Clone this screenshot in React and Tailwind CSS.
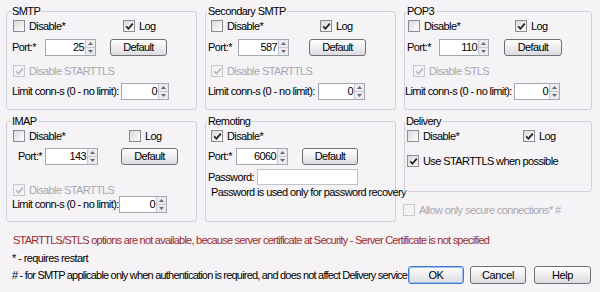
import React from "react";

const BG = "bg-[#f5f3f6]";

function Check({ checked, disabled }) {
  return (
    <span
      className={`w-[12px] h-[12px] shrink-0 border flex items-center justify-center ${
        disabled
          ? "border-[#c9c8cc] bg-[#f3f2f4]"
          : "border-[#8c8c90] bg-linear-to-br from-[#d9d9dc] to-white"
      }`}
    >
      {checked && (
        <svg width="9" height="9" viewBox="0 0 9 9">
          <path
            d="M1.2 4.3 L3.4 6.8 L7.8 1.6"
            stroke={disabled ? "#b8b8bc" : "#1e1e1e"}
            strokeWidth="1.7"
            fill="none"
          />
        </svg>
      )}
    </span>
  );
}

function CheckLabel({ checked, disabled, label, className = "" }) {
  return (
    <span className={`flex items-center gap-[4px] whitespace-nowrap ${className}`}>
      <Check checked={checked} disabled={disabled} />
      <span className={disabled ? "text-[#a9a8ad]" : "text-black"}>{label}</span>
    </span>
  );
}

function Spin({ value, w }) {
  return (
    <span className="flex h-[17px] border border-[#a4a8b0] bg-white shrink-0">
      <span className="flex items-center justify-end pr-[1px] text-black" style={{ width: w }}>
        {value}
      </span>
      <span className="w-[10px] flex flex-col border-l border-[#c6c6ce] bg-[#ececf0]">
        <span className="flex-1 flex items-center justify-center border-b border-[#c6c6ce]">
          <svg width="5" height="3" viewBox="0 0 5 3">
            <path d="M0 3 L2.5 0 L5 3 Z" fill="#6a6a70" />
          </svg>
        </span>
        <span className="flex-1 flex items-center justify-center">
          <svg width="5" height="3" viewBox="0 0 5 3">
            <path d="M0 0 L2.5 3 L5 0 Z" fill="#6a6a70" />
          </svg>
        </span>
      </span>
    </span>
  );
}

function Btn({ label, className = "", focus }) {
  return (
    <span
      className={`h-[17px] flex items-center justify-center rounded-[3px] border bg-linear-to-b from-white to-[#dcdce0] text-black shrink-0 ${
        focus ? "border-[#3c7fd0] shadow-[inset_0_0_0_1px_#9cc0ea]" : "border-[#707074]"
      } ${className}`}
    >
      {label}
    </span>
  );
}

function Group({ title, legendMl, h, children }) {
  return (
    <div className={`border border-[#d4d2d9] rounded-[3px] ${h}`}>
      <div className={`-mt-[7px] w-fit px-[1px] h-[12px] leading-[12px] whitespace-nowrap ${BG} ${legendMl}`}>
        {title}
      </div>
      {children}
    </div>
  );
}

export default function App() {
  return (
    <div
      className={`w-[600px] h-[292px] ${BG} overflow-hidden text-[11px] tracking-[-0.6px] leading-[14px] text-black font-['Liberation_Sans',Arial,sans-serif] pt-[11px] pl-[6px]`}
    >
      <div className="grid grid-cols-[191px_191px_188px] gap-x-[8px] gap-y-[11px] items-start">
        {/* SMTP */}
        <Group title="SMTP" legendMl="ml-[4px]" h="h-[99px]">
          <div className="h-[18px] flex items-center">
            <span className="ml-[6px] w-[110px]">
              <CheckLabel label="Disable*" />
            </span>
            <CheckLabel checked label="Log" />
          </div>
          <div className="mt-[3px] h-[18px] flex items-center">
            <span className="ml-[5px] w-[33px]">Port:*</span>
            <Spin value="25" w={39} />
            <Btn label="Default" className="ml-[14px] w-[57px]" />
          </div>
          <div className="mt-[8px] h-[14px] flex items-center">
            <CheckLabel checked disabled label="Disable STARTTLS" className="ml-[6px]" />
          </div>
          <div className="mt-[4px] h-[18px] flex items-center">
            <span className="ml-[5px] w-[109px] whitespace-nowrap">Limit conn-s (0 - no limit):</span>
            <Spin value="0" w={36} />
          </div>
        </Group>

        {/* Secondary SMTP */}
        <Group title="Secondary SMTP" legendMl="ml-[1px]" h="h-[99px]">
          <div className="h-[18px] flex items-center">
            <span className="ml-[5px] w-[109px]">
              <CheckLabel label="Disable*" />
            </span>
            <CheckLabel checked label="Log" />
          </div>
          <div className="mt-[3px] h-[18px] flex items-center">
            <span className="ml-[2px] w-[30px]">Port:*</span>
            <Spin value="587" w={39} />
            <Btn label="Default" className="ml-[20px] w-[57px]" />
          </div>
          <div className="mt-[8px] h-[14px] flex items-center">
            <CheckLabel checked disabled label="Disable STARTTLS" className="ml-[5px]" />
          </div>
          <div className="mt-[4px] h-[18px] flex items-center">
            <span className="ml-[2px] w-[110px] whitespace-nowrap">Limit conn-s (0 - no limit):</span>
            <Spin value="0" w={35} />
          </div>
        </Group>

        {/* POP3 */}
        <Group title="POP3" legendMl="ml-[1px]" h="h-[99px]">
          <div className="h-[18px] flex items-center">
            <span className="ml-[3px] w-[107px]">
              <CheckLabel label="Disable*" />
            </span>
            <CheckLabel checked label="Log" />
          </div>
          <div className="mt-[3px] h-[18px] flex items-center">
            <span className="ml-[2px] w-[32px]">Port:*</span>
            <Spin value="110" w={38} />
            <Btn label="Default" className="ml-[15px] w-[58px]" />
          </div>
          <div className="mt-[8px] h-[14px] flex items-center">
            <CheckLabel checked disabled label="Disable STLS" className="ml-[8px]" />
          </div>
          <div className="mt-[4px] h-[18px] flex items-center">
            <span className="ml-[0px] w-[109px] whitespace-nowrap">Limit conn-s (0 - no limit):</span>
            <Spin value="0" w={34} />
          </div>
        </Group>

        {/* IMAP */}
        <Group title="IMAP" legendMl="ml-[4px]" h="h-[101px]">
          <div className="h-[18px] flex items-center">
            <span className="ml-[6px] w-[116px]">
              <CheckLabel label="Disable*" />
            </span>
            <CheckLabel label="Log" />
          </div>
          <div className="mt-[2px] h-[18px] flex items-center">
            <span className="ml-[11px] w-[27px]">Port:*</span>
            <Spin value="143" w={41} />
            <Btn label="Default" className="ml-[23px] w-[57px]" />
          </div>
          <div className="mt-[18px] h-[14px] flex items-center">
            <CheckLabel checked disabled label="Disable STARTTLS" className="ml-[6px]" />
          </div>
          <div className="-mt-[2px] h-[18px] flex items-center">
            <span className="ml-[5px] w-[107px] whitespace-nowrap">Limit conn-s (0 - no limit):</span>
            <Spin value="0" w={36} />
          </div>
        </Group>

        {/* Remoting */}
        <Group title="Remoting" legendMl="ml-[1px]" h="h-[101px]">
          <div className="h-[18px] flex items-center">
            <CheckLabel checked label="Disable*" className="ml-[5px]" />
          </div>
          <div className="mt-[2px] h-[18px] flex items-center">
            <span className="ml-[2px] w-[28px]">Port:*</span>
            <Spin value="6060" w={40} />
            <Btn label="Default" className="ml-[14px] w-[56px]" />
          </div>
          <div className="mt-[4px] h-[16px] flex items-center">
            <span className="ml-[2px] w-[49px]">Password:</span>
            <span className="w-[101px] h-[16px] border border-[#c2c4ca] bg-white" />
          </div>
          <div className="h-[14px] flex items-center">
            <span className="ml-[5px] whitespace-nowrap">Password is used only for password recovery</span>
          </div>
        </Group>

        {/* Delivery */}
        <div className="flex flex-col">
          <Group title="Delivery" legendMl="ml-[0px]" h="h-[71px]">
            <div className="h-[18px] flex items-center">
              <span className="ml-[2px] w-[116px]">
                <CheckLabel label="Disable*" />
              </span>
              <CheckLabel checked label="Log" />
            </div>
            <div className="mt-[8px] h-[16px] flex items-center">
              <CheckLabel checked label="Use STARTTLS when possible" className="ml-[2px]" />
            </div>
          </Group>
          <div className="mt-[11px] h-[14px] flex items-center">
            <CheckLabel disabled label="Allow only secure connections* #" className="-ml-[1px]" />
          </div>
        </div>
      </div>

      <div className="mt-[11px] h-[14px] flex items-center pl-[7px] text-[#9a2b2d] whitespace-nowrap tracking-[-0.76px]">
        STARTTLS/STLS options are not available, because server certificate at Security - Server Certificate is not specified
      </div>
      <div className="mt-[4px] h-[14px] flex items-center pl-[6px]">* - requires restart</div>
      <div className="mt-[1px] h-[18px] flex items-center pl-[6px] pr-[9px]">
        <span className="whitespace-nowrap tracking-[-0.8px]">
          # - for SMTP applicable only when authentication is required, and does not affect Delivery service
        </span>
        <span className="ml-auto shrink-0 flex items-center tracking-[-0.4px]">
          <Btn label="OK" focus className="w-[56px] h-[18px]" />
          <Btn label="Cancel" className="ml-[6px] w-[56px] h-[18px]" />
          <Btn label="Help" className="ml-[8px] w-[57px] h-[18px]" />
        </span>
      </div>
    </div>
  );
}
